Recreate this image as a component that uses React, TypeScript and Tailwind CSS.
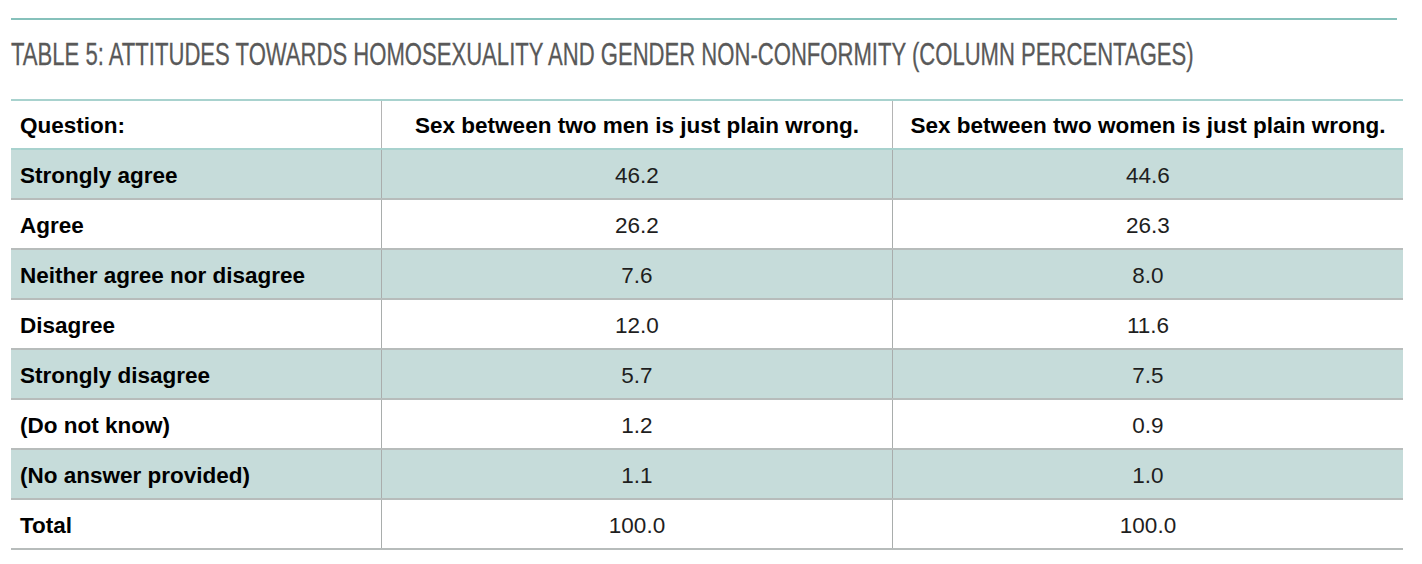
const rows: { label: string; men: string; women: string }[] = [
  { label: 'Strongly agree', men: '46.2', women: '44.6' },
  { label: 'Agree', men: '26.2', women: '26.3' },
  { label: 'Neither agree nor disagree', men: '7.6', women: '8.0' },
  { label: 'Disagree', men: '12.0', women: '11.6' },
  { label: 'Strongly disagree', men: '5.7', women: '7.5' },
  { label: '(Do not know)', men: '1.2', women: '0.9' },
  { label: '(No answer provided)', men: '1.1', women: '1.0' },
  { label: 'Total', men: '100.0', women: '100.0' },
];

export default function App() {
  return (
    <div className="h-[564px] w-[1422px] bg-white font-['Liberation_Sans',Arial,sans-serif] text-black">
      {/* top rule */}
      <div className="ml-[11px] w-[1386px] pt-[18px]">
        <div className="h-[2px] bg-[#86c1bb]" />
      </div>

      {/* caption */}
      <div className="ml-[11px] mt-[18px] h-[32px] overflow-visible whitespace-nowrap">
        <div className="origin-left scale-x-[0.69] text-[32px] leading-[32px] text-[#595959] [-webkit-text-stroke:0.3px_#595959]">
          TABLE 5: ATTITUDES TOWARDS HOMOSEXUALITY AND GENDER NON-CONFORMITY (COLUMN PERCENTAGES)
        </div>
      </div>

      {/* table */}
      <div className="ml-[11px] mt-[29px] w-[1392px] border-t-2 border-[#a8d2ce] text-[22.5px]">
        <div className="grid h-[49px] grid-cols-[370px_511px_511px] border-b-2 border-[#a8d2ce] font-bold">
          <div className="flex items-center pl-[9px] pt-[3px]">Question:</div>
          <div className="flex items-center justify-center border-l border-[#b4b4b4] pt-[3px]">
            Sex between two men is just plain wrong.
          </div>
          <div className="flex items-center justify-center border-l border-[#b4b4b4] pt-[3px]">
            Sex between two women is just plain wrong.
          </div>
        </div>
        {rows.map((r, i) => (
          <div
            key={r.label}
            className={
              i % 2 === 0
                ? 'grid h-[50px] grid-cols-[370px_511px_511px] border-b-2 border-[#b7bcbb] bg-[#c6dcda]'
                : 'grid h-[50px] grid-cols-[370px_511px_511px] border-b-2 border-[#b7bcbb] bg-white'
            }
          >
            <div className="flex items-center pl-[9px] pt-[4px] font-bold">{r.label}</div>
            <div className="flex items-center justify-center border-l border-[#a9adac] pt-[4px] text-[#1e1e1e]">
              {r.men}
            </div>
            <div className="flex items-center justify-center border-l border-[#a9adac] pt-[4px] text-[#1e1e1e]">
              {r.women}
            </div>
          </div>
        ))}
      </div>
    </div>
  );
}
